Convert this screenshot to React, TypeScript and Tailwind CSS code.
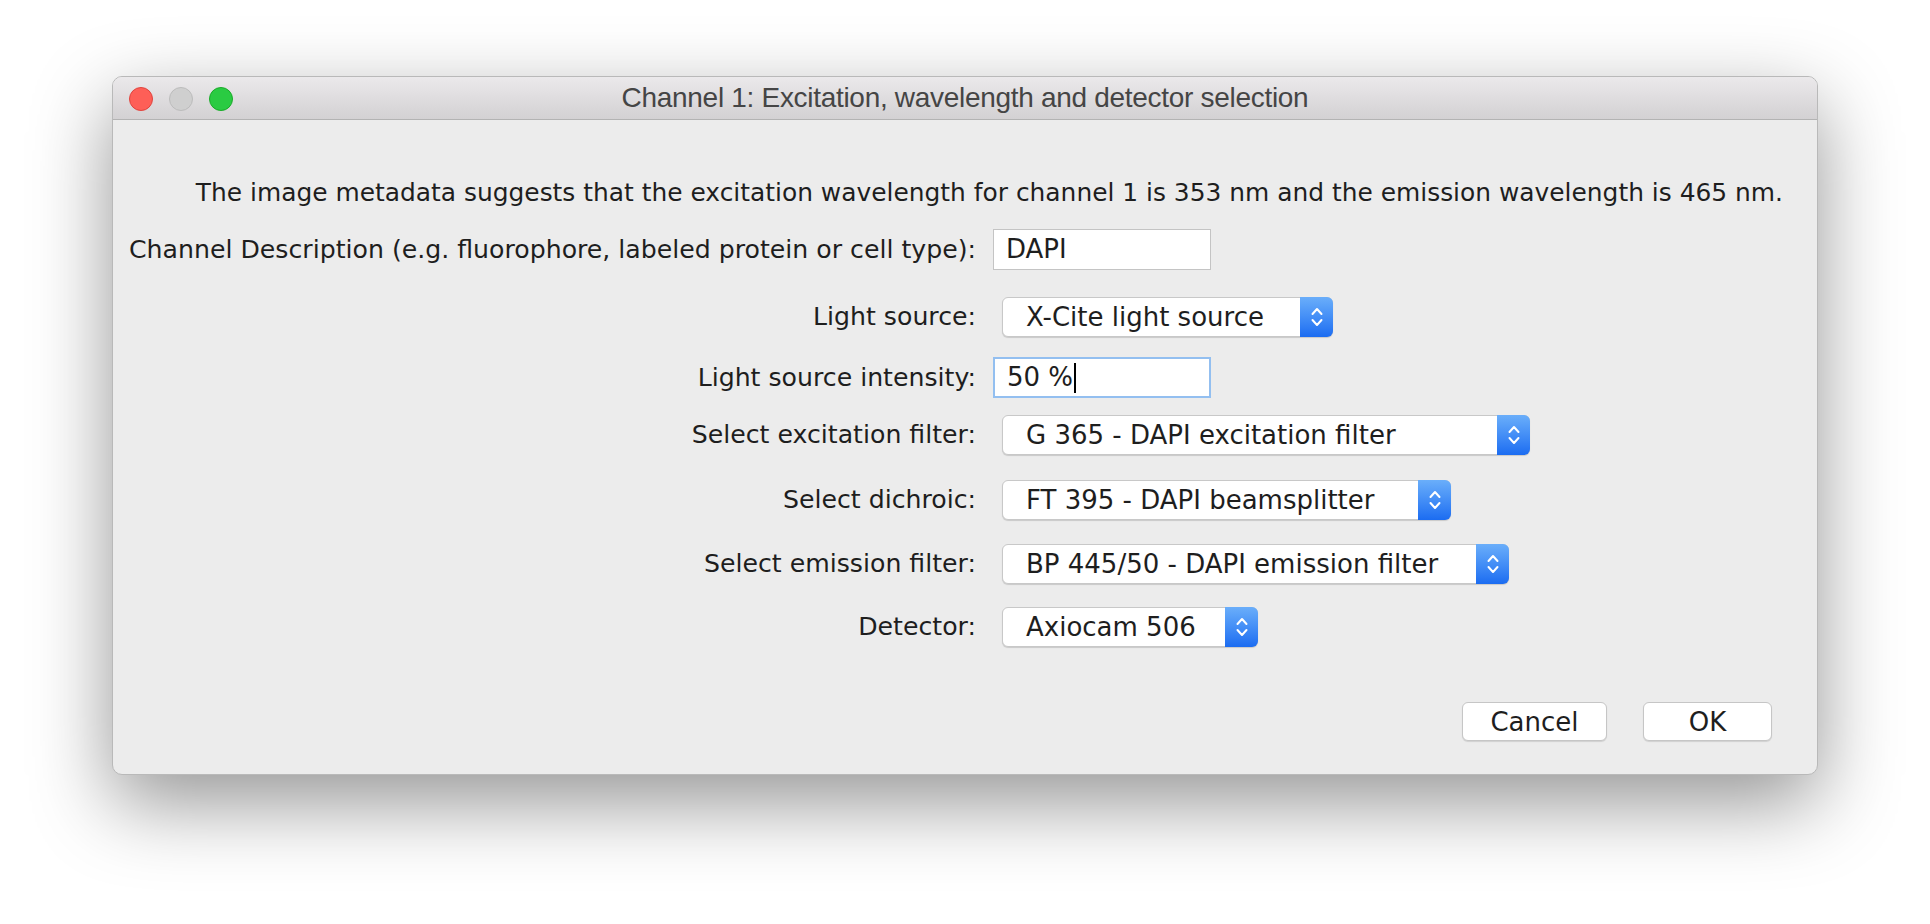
const Chevrons = () => (
  <svg width="14" height="28" viewBox="0 0 14 28" fill="none" stroke="white" strokeWidth="2" strokeLinecap="round" strokeLinejoin="round">
    <path d="M2.5 11 L7 6 L11.5 11" />
    <path d="M2.5 17 L7 22 L11.5 17" />
  </svg>
);

const Combo = ({ value, width }: { value: string; width: string }) => (
  <div className={`ml-[9px] flex h-[40px] ${width} rounded-[6px] border border-[#c8c8c8] bg-white shadow-[0_1px_1px_rgba(0,0,0,0.15)]`}>
    <div className="flex flex-1 items-center whitespace-nowrap pl-[23px] text-[26px] text-[#1e1e1e]">{value}</div>
    <div className="-my-px -mr-px flex w-[33px] items-center justify-center rounded-r-[6px] bg-gradient-to-b from-[#6aaefa] to-[#1b6cf1]">
      <Chevrons />
    </div>
  </div>
);

const Row = ({ label, className, children }: { label: string; className: string; children: React.ReactNode }) => (
  <div className={`flex items-center ${className}`}>
    <div className="flex w-[880px] shrink-0 justify-end pr-[17px]">
      <span className="whitespace-nowrap text-[25.2px] leading-[30px] text-[#1e1e1e]">{label}</span>
    </div>
    {children}
  </div>
);

const App = () => {
  return (
    <div className="min-h-screen w-full bg-white pl-[112px] pt-[76px] font-['DejaVu_Sans',sans-serif]">
      <div className="flex h-[699px] w-[1706px] flex-col overflow-hidden rounded-[10px] border border-[#b9b9b9] bg-[#ececec] shadow-[0_28px_80px_rgba(0,0,0,0.42)]">
        {/* title bar */}
        <div className="relative flex h-[43px] shrink-0 items-center justify-center border-b border-[#b3b3b3] bg-gradient-to-b from-[#ebe9eb] to-[#d3d1d3]">
          <div className="absolute left-[16px] top-[10px] flex gap-[16px]">
            <div className="h-[24px] w-[24px] rounded-full border border-[#e0443e] bg-[#fe5f57]" />
            <div className="h-[24px] w-[24px] rounded-full border border-[#bcbcbc] bg-[#cfcfcf]" />
            <div className="h-[24px] w-[24px] rounded-full border border-[#1aab29] bg-[#2acb42]" />
          </div>
          <span className="font-['Liberation_Sans',sans-serif] text-[28px] tracking-[-0.3px] text-[#454545]">
            Channel 1: Excitation, wavelength and detector selection
          </span>
        </div>

        {/* body */}
        <div className="flex flex-1 flex-col pt-[58px]">
          <div className="whitespace-nowrap pr-[34px] text-right text-[24.9px] leading-[30px] text-[#1e1e1e]">
            The image metadata suggests that the excitation wavelength for channel 1 is 353 nm and the emission wavelength is 465 nm.
          </div>

          <Row label="Channel Description (e.g. fluorophore, labeled protein or cell type):" className="mt-[21px]">
            <div className="flex h-[41px] w-[218px] items-center border border-[#c4c4c4] bg-white pl-[12px] text-[26px] text-[#1e1e1e]">
              DAPI
            </div>
          </Row>

          <Row label="Light source:" className="mt-[27px]">
            <Combo value="X-Cite light source" width="w-[331px]" />
          </Row>

          <Row label="Light source intensity:" className="mt-[20px]">
            <div className="flex h-[41px] w-[218px] items-center border-2 border-[#93bff0] bg-white pl-[12px] text-[26px] text-[#1e1e1e]">
              50 %<span className="ml-[1px] h-[30px] w-[2px] bg-black" />
            </div>
          </Row>

          <Row label="Select excitation filter:" className="mt-[17px]">
            <Combo value="G 365 - DAPI excitation filter" width="w-[528px]" />
          </Row>

          <Row label="Select dichroic:" className="mt-[25px]">
            <Combo value="FT 395 - DAPI beamsplitter" width="w-[449px]" />
          </Row>

          <Row label="Select emission filter:" className="mt-[24px]">
            <Combo value="BP 445/50 - DAPI emission filter" width="w-[507px]" />
          </Row>

          <Row label="Detector:" className="mt-[23px]">
            <Combo value="Axiocam 506" width="w-[256px]" />
          </Row>

          <div className="mt-auto flex justify-end gap-[36px] pb-[33px] pr-[45px]">
            <button type="button" className="h-[39px] w-[145px] rounded-[6px] border border-[#c6c6c6] bg-white text-[26px] text-[#1e1e1e] shadow-[0_1px_1px_rgba(0,0,0,0.12)]">
              Cancel
            </button>
            <button type="button" className="h-[39px] w-[129px] rounded-[6px] border border-[#c6c6c6] bg-white text-[26px] text-[#1e1e1e] shadow-[0_1px_1px_rgba(0,0,0,0.12)]">
              OK
            </button>
          </div>
        </div>
      </div>
    </div>
  );
};

export default App;
